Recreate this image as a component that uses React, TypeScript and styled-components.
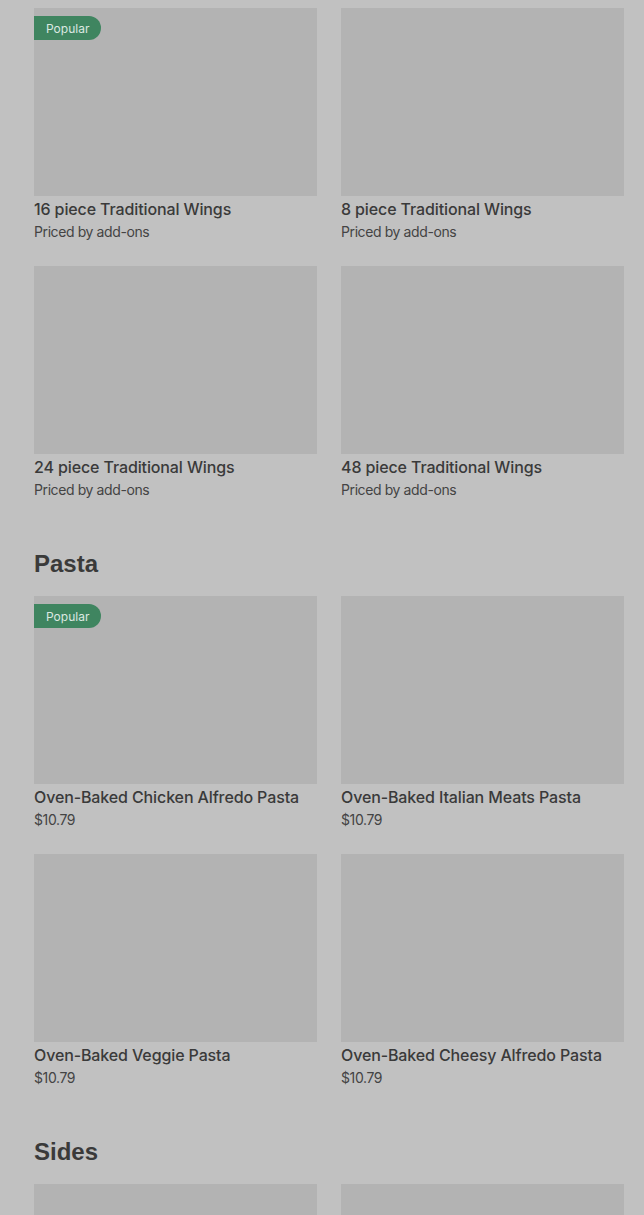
import styled, { createGlobalStyle } from 'styled-components';

type Item = {
  name: string;
  price: string;
  popular?: boolean;
};

type Section = {
  title?: string;
  items: Item[];
};

const sections: Section[] = [
  {
    items: [
      { name: '16 piece Traditional Wings', price: 'Priced by add-ons', popular: true },
      { name: '8 piece Traditional Wings', price: 'Priced by add-ons' },
      { name: '24 piece Traditional Wings', price: 'Priced by add-ons' },
      { name: '48 piece Traditional Wings', price: 'Priced by add-ons' },
    ],
  },
  {
    title: 'Pasta',
    items: [
      { name: 'Oven-Baked Chicken Alfredo Pasta', price: '$10.79', popular: true },
      { name: 'Oven-Baked Italian Meats Pasta', price: '$10.79' },
      { name: 'Oven-Baked Veggie Pasta', price: '$10.79' },
      { name: 'Oven-Baked Cheesy Alfredo Pasta', price: '$10.79' },
    ],
  },
  {
    title: 'Sides',
    items: [
      { name: '', price: '' },
      { name: '', price: '' },
    ],
  },
];

export default function App() {
  return (
    <>
      <GlobalStyle />
      <Page>
        {sections.map((section, i) => (
          <MenuSection key={i}>
            {section.title && <SectionTitle>{section.title}</SectionTitle>}
            <Grid>
              {section.items.map((item, j) => (
                <Card key={j}>
                  <Thumb>{item.popular && <Badge>Popular</Badge>}</Thumb>
                  {item.name && <ItemName>{item.name}</ItemName>}
                  {item.price && <ItemPrice>{item.price}</ItemPrice>}
                </Card>
              ))}
            </Grid>
          </MenuSection>
        ))}
      </Page>
    </>
  );
}

const GlobalStyle = createGlobalStyle`
  html, body {
    margin: 0;
    padding: 0;
    background: #c1c1c1;
    height: 1215px;
    overflow: hidden;
  }
`;

const Page = styled.div`
  padding: 8px 20px 0 34px;
  font-family: Inter, 'Noto Sans', sans-serif;
  color: #3a3a3a;
`;

const MenuSection = styled.section`
  display: flex;
  flex-direction: column;
`;

const SectionTitle = styled.h2`
  margin: 48px 0 16px;
  font-family: 'Liberation Sans', Arial, sans-serif;
  font-size: 24px;
  line-height: 32px;
  font-weight: 700;
  color: #3a3a3a;
`;

const Grid = styled.div`
  display: grid;
  grid-template-columns: repeat(2, 283px);
  column-gap: 24px;
  row-gap: 24px;
`;

const Card = styled.div`
  display: flex;
  flex-direction: column;
  min-height: 234px;
`;

const Thumb = styled.div`
  position: relative;
  height: 188px;
  background: #b3b3b3;
`;

const Badge = styled.span`
  position: absolute;
  top: 8px;
  left: 0;
  height: 24px;
  padding: 0 12px;
  display: flex;
  align-items: center;
  background: #3f8560;
  color: #dce8e1;
  font-size: 12px;
  border-radius: 0 12px 12px 0;
`;

const ItemName = styled.div`
  margin-top: 1px;
  font-size: 16px;
  line-height: 24px;
  font-weight: 500;
  letter-spacing: -0.12px;
  color: #3a3a3a;
`;

const ItemPrice = styled.div`
  font-size: 14px;
  line-height: 21px;
  letter-spacing: -0.4px;
  color: #444;
`;
